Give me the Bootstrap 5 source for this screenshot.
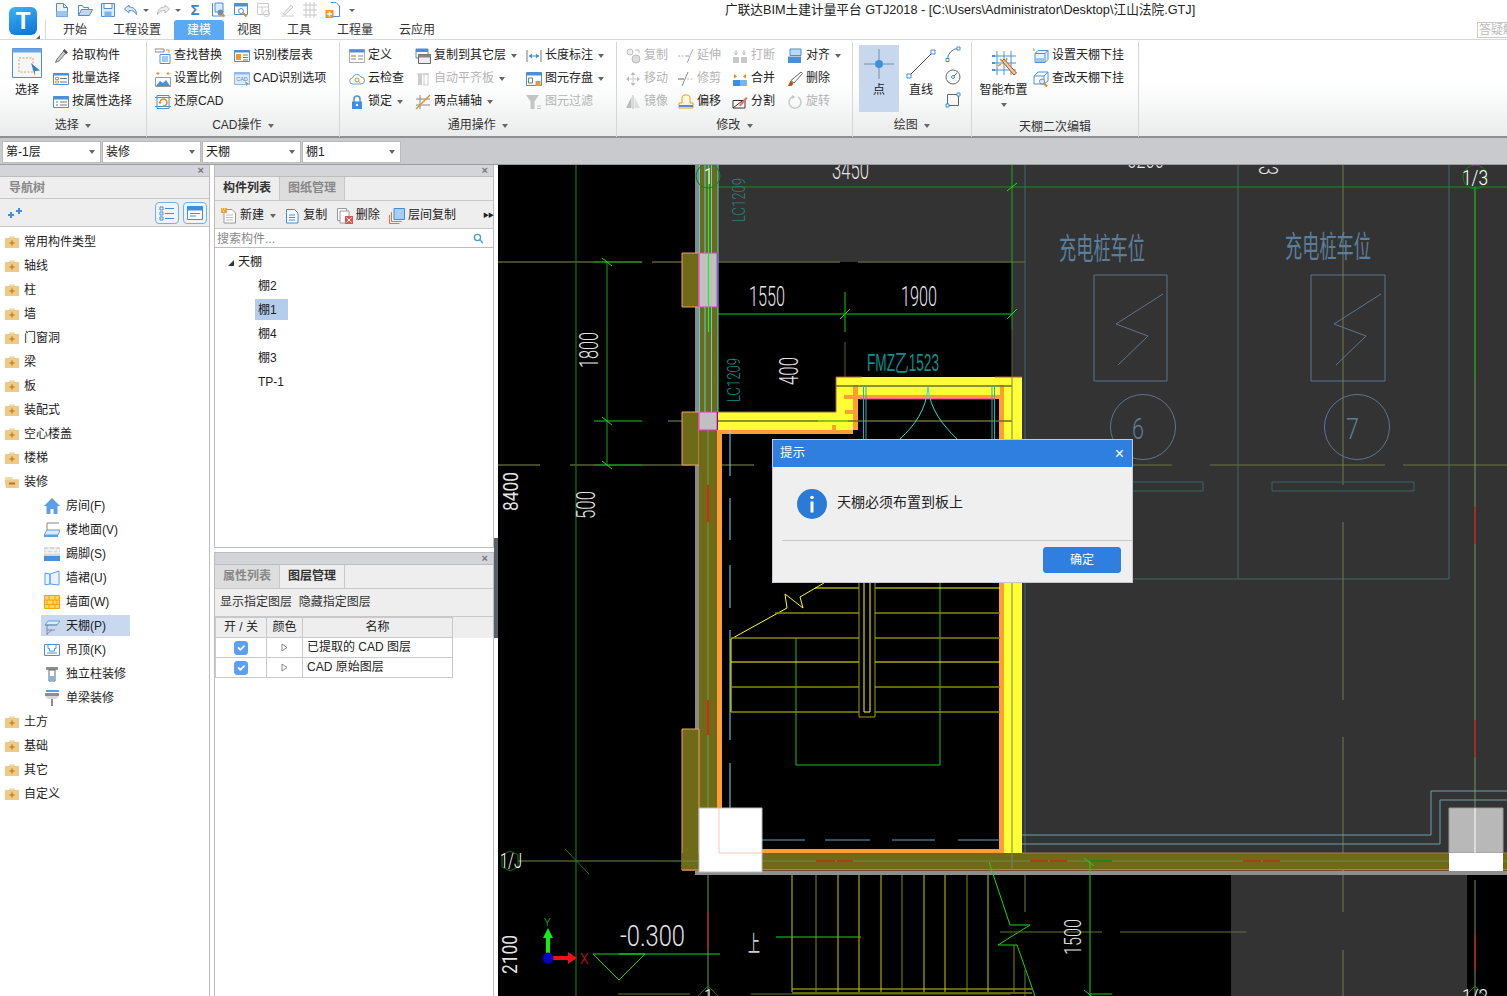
<!DOCTYPE html>
<html lang="zh-CN">
<head>
<meta charset="UTF-8">
<title>广联达BIM土建计量平台 GTJ2018</title>
<link href="https://cdn.jsdelivr.net/npm/bootstrap@5.3.0/dist/css/bootstrap.min.css" rel="stylesheet">
<style>
    html, body { width: 1507px; height: 996px; overflow: hidden; }
    body { font: 12px/1.2 "Liberation Sans", "Noto Sans CJK SC", sans-serif; color: #222; background: #fff; }
    .ic { width: 16px; height: 16px; flex: none; color: #4a90d9; }
    .ic-off { color: #bdbdbd; }

    /* title + tabs */
    .app-top { height: 40px; border-bottom: 1px solid #d9d9d9; }
    .app-logo { width: 46px; height: 40px; padding: 7px 0 0 9px; position: relative; }
    .app-logo-tile { width: 28px; height: 28px; border-radius: 6px; background: linear-gradient(160deg, #3bb3f2, #0d72d8); color: #fff; font: bold 24px/28px "Liberation Sans", sans-serif; text-align: center; }
    .app-logo-mark { position: absolute; right: 6px; bottom: 1px; border-left: 4px solid transparent; border-bottom: 4px solid #666; }
    .qa-row { height: 20px; }
    .qa-icons { width: 679px; padding-left: 8px; gap: 7px; }
    .qa-caret { width: 6px; margin: 0 -1px 0 -3px; border-top: 3px solid #666; border-left: 3px solid transparent; border-right: 3px solid transparent; height: 0; flex: none; }
    .qa-caret-end { margin-left: 1px; }
    .qa-sigma { color: #3f7fc4; font-size: 15px; width: 16px; text-align: center; font-weight: bold; }
    .qa-title { white-space: nowrap; font-size: 12.7px; padding-top: 1px; }
    .tab-row { height: 20px; border-left: 1px solid #d9d9d9; margin-left: -1px; padding-left: 4px; }
    .tab-item { padding: 0 13px; line-height: 21px; color: #333; white-space: nowrap; }
    .tab-on { background: #5aa9f5; color: #fff; border-radius: 3px 3px 0 0; }
    .help-box { width: 60px; height: 16px; margin: 2px -30px 0 auto; border: 1px solid #ccc; color: #bbb; padding-left: 1px; line-height: 14px; white-space: nowrap; overflow: hidden; }

    /* ribbon */
    .ribbon { height: 98px; background: linear-gradient(#fff 45%, #eaecec); border-bottom: 2px solid #8e9093; }
    .rb-group { height: 95px; border-right: 1px solid #d5d7d7; flex-direction: column; display: flex; margin-top: 2px; }
    .rb-body { height: 73px; padding-top: 2px; }
    .rb-foot { text-align: center; color: #333; height: 20px; line-height: 20px; }
    .rb-foot-low { line-height: 24px; }
    .rb-col { flex: none; }
    .rb-item { height: 23px; display: flex; align-items: center; gap: 3px; white-space: nowrap; }
    .rb-off { color: #b4b4b4; }
    .rb-big { text-align: center; flex: none; }
    .rb-big-on { background: #c7d7ee; height: 67px; }
    .rb-label { margin-top: 4px; }
    .rb-label-low { margin-top: 5px; }
    .caret-dn { display: inline-block; border-top: 4px solid #666; border-left: 3px solid transparent; border-right: 3px solid transparent; margin-left: 3px; vertical-align: 1px; }
    .rb-item .caret-dn { margin-left: 2px; }

    /* selector bar */
    .pick-bar { height: 27px; background: #c8cacd; border-bottom: 1px solid #9a9c9f; padding: 3px 0 0 2px; gap: 1px; }
    .pick-bar .form-select { width: 99px; height: 22px; min-height: 0; padding: 0 0 0 3px; font-size: 12px; line-height: 20px; border-radius: 0; border: 1px solid #bbb; color: #222; background-position: right 4px center; background-size: 8px 6px;
        background-image: url("data:image/svg+xml,%3csvg xmlns='http://www.w3.org/2000/svg' viewBox='0 0 8 6'%3e%3cpath fill='%23666' d='M1 1h6L4 5z'/%3e%3c/svg%3e"); }

    /* side panels */
    .main-area { height: 831px; }
    .side-box { border-left: 1px solid #bdbdbd; border-right: 1px solid #bdbdbd; background: #fff; }
    .side-nav { width: 210px; border-left-width: 0; }
    .side-mid { width: 280px; margin-left: 4px; }
    .pane-grip { height: 12px; background: #d4d5da; color: #777; font-size: 11px; line-height: 11px; text-align: right; padding-right: 5px; border-bottom: 1px solid #bdbdbd; font-weight: bold; }
    .pane-title { height: 22px; background: #eee; color: #888; font-weight: bold; line-height: 23px; padding-left: 9px; border-bottom: 1px solid #c8c8c8; }
    .pane-tools { height: 28px; background: #eee; border-bottom: 1px solid #c8c8c8; }
    .view-btn { width: 24px; height: 22px; padding: 0; border: 1px solid #6db3f2; border-radius: 4px; background: #eef5fc; display: flex; align-items: center; justify-content: center; }
    .tree-item { border: 0; padding: 0 0 0 4px; height: 24px; display: flex; align-items: center; gap: 6px; background: transparent; color: #222; }
    .tree-top { gap: 4px; }
    .tree-kid { padding-left: 44px; }
    .tree-sel { background: #c7d8ef; margin-left: 41px; padding: 2px 0 0 3px; width: 89px; height: 21px; margin-top: 1px; margin-bottom: 2px; }
    .tree-list { padding-top: 3px; }

    .pane-tabs { height: 24px; background: #eee; border-bottom: 1px solid #c8c8c8; flex-wrap: nowrap; }
    .pane-tab { width: 65px; text-align: center; line-height: 23px; font-weight: bold; color: #333; border-right: 1px solid #c8c8c8; }
    .pane-tab-off { background: #ddd; color: #888; }
    .mid-tool { gap: 3px; white-space: nowrap; }
    .mid-tools { padding: 2px 0 0 6px; }
    .mid-more { font-size: 6px; letter-spacing: -1px; font-weight: bold; }
    .search-row { height: 19px; border-bottom: 1px solid #bdbdbd; padding: 1px 9px 0 2px; color: #888; line-height: 18px; }
    .search-ic { width: 11px; height: 11px; }
    .comp-row { height: 24px; line-height: 24px; padding-left: 43px; }
    .comp-root { padding-left: 13px; }
    .comp-sel { background: #b3cdea; width: 33px; margin-left: 40px; padding-left: 3px; height: 21px; line-height: 22px; margin-top: 1px; margin-bottom: 2px; }
    .comp-tri { display: inline-block; border-bottom: 6px solid #333; border-left: 6px solid transparent; margin-right: 4px; }
    .comp-list { padding-top: 2px; height: 299px; }
    .pane-gap { height: 4px; background: #fff; border-top: 1px solid #bdbdbd; border-bottom: 1px solid #bdbdbd; margin: 0 -1px; box-sizing: content-box; }
    .layer-links { height: 28px; background: #eee; line-height: 27px; padding-left: 5px; border-bottom: 1px solid #c8c8c8; color: #333; }
    .layer-wrap { background: linear-gradient(#eee 21px, #fff 21px); }
    .layer-table { width: 238px; margin: 0; font-size: 12px; color: #222; --bs-table-bg: transparent; border-color: #c8c8c8; table-layout: fixed; }
    .layer-table th, .layer-table td { padding: 0; height: 20px; line-height: 19px; font-weight: normal; vertical-align: middle; }
    .layer-table .layer-name { padding-bottom: 2px; line-height: 16px; }
    .layer-check { width: 14px; height: 14px; margin: 3px 0 0 0; float: none; border-radius: 2px; background-color: #5aa1f5 !important; border-color: #5aa1f5 !important; }
    .layer-tri { display: inline-block; width: 7px; height: 9px; vertical-align: -1px; }

    .split-bar { width: 4px; background: #fff; position: relative; }
    .split-grip { position: absolute; left: 0; top: 373px; width: 4px; height: 100px; background: #5b5f66; }
    .cad-area { width: 1009px; position: relative; background: #000; overflow: hidden; }
    .cad-svg { display: block; }
    .cad-num { font-family: Roboto, "Liberation Sans", sans-serif; font-weight: 300; fill: #e4e4e4; }
    .cad-bold { font-weight: 400; }
    .cad-cn { font-family: "Noto Sans CJK SC", sans-serif; fill: #5b7e9b; }
    .cad-up { font-family: "Noto Sans CJK SC", sans-serif; fill: #cfcfcf; }
    .cad-slate { fill: #5b7e9b; }
    .cad-white { fill: #fff; }
    .cad-teal { fill: #0e8f8f; font-family: "Liberation Sans", "Noto Sans CJK SC", sans-serif; font-weight: 400; }
    .cad-teal-dim { fill: #2a7f7c; }
    .cad-teal-mid { fill: #0e8f8f; }
    .cad-axis-y { fill: #11cc11; }
    .cad-axis-x { fill: #e01111; }

    /* dialog over the drawing */
    .tip-box { position: absolute; left: 274px; top: 274px; width: 361px; height: 144px; border: 1px solid #c5c8ce; border-radius: 0; background: #efefef; }
    .tip-head { height: 27px; background: #2e7fe0; color: #fff; line-height: 27px; padding: 0 8px 0 7px; border: 0; border-radius: 0 !important; font-size: 12.5px; }
    .tip-x { font-size: 16px; font-weight: normal; }
    .tip-body { height: 74px; gap: 10px; font-size: 14px; border-bottom: 1px solid #c8c8c8; width: 350px; margin-left: 9px; margin-right: 0; padding-left: 15px; }
    .tip-msg { margin-bottom: 2px; }
    .tip-foot { padding: 6px 11px 0 0; }
    .tip-btn { width: 78px; height: 26px; padding: 0; font-size: 12px; background: #2e7fe0; border-color: #2e7fe0; border-radius: 3px; }
</style>
</head>
<body>

<!-- shared icon shapes -->
<svg width="0" height="0" class="position-absolute">
<defs>
    <symbol id="i-doc" viewBox="0 0 16 16"><path d="M2.500 1.500h7l4 4v9h-11z" fill="#eaf3fc" stroke="#4a90d9"/><path d="M2.500 9h11v5.500h-11z" fill="#9cc5ef"/><path d="M9.500 1.500v4h4" fill="none" stroke="#4a90d9"/></symbol>
    <symbol id="i-open" viewBox="0 0 16 16"><path d="M1.500 13.500v-10h4l1 2h5v2" fill="none" stroke="#4a90d9"/><path d="M1.500 13.500l3-6h11l-3 6z" fill="#bcd8f5" stroke="#4a90d9"/></symbol>
    <symbol id="i-save" viewBox="0 0 16 16"><path d="M1.500 1.500h13v13h-13z" fill="#dcebfa" stroke="#4a90d9"/><path d="M4 1.500h8v5h-8z" fill="#fff" stroke="#4a90d9"/><path d="M4.500 9.500h7v5h-7z" fill="#7fb4ea"/></symbol>
    <symbol id="i-undo" viewBox="0 0 16 16"><path d="M6 3L1.500 7 6 11V8.500c4 0 6 1 7.500 4 0-5-3-7.500-7.500-7.500z" fill="#dcebfa" stroke="currentColor"/></symbol>
    <symbol id="i-redo" viewBox="0 0 16 16"><path d="M10 3l4.500 4L10 11V8.500c-4 0-6 1-7.500 4 0-5 3-7.500 7.500-7.500z" fill="#eee" stroke="#bbb"/></symbol>
    <symbol id="i-sheet" viewBox="0 0 16 16"><path d="M2.500 1v13h11" fill="none" stroke="#4a90d9"/><path d="M5 1h8v9h-8z" fill="#dcebfa" stroke="#4a90d9"/><circle cx="10.500" cy="10.500" r="3" fill="#6d8fb5"/><path d="M12 12l2.500 2.500" stroke="#e88a1a" stroke-width="2"/></symbol>
    <symbol id="i-view" viewBox="0 0 16 16"><path d="M1.500 1.500h13v11h-13z" fill="#fff" stroke="#4a90d9"/><path d="M1.500 1.500h13v3h-13z" fill="#4a90d9"/><circle cx="8" cy="9" r="2.500" fill="none" stroke="#4a90d9"/><path d="M10 11l3.500 3.500" stroke="#e88a1a" stroke-width="2"/></symbol>
    <symbol id="i-grid" viewBox="0 0 16 16"><path d="M1.500 1.500h11v11h-11zM1.500 5h11M6 5v7.500" fill="none" stroke="#ccc"/><circle cx="10.500" cy="11.500" r="3" fill="none" stroke="#ccc"/></symbol>
    <symbol id="i-pen-off" viewBox="0 0 16 16"><path d="M2 14h13M4 12l8-9 2 2-8 8z" fill="#eee" stroke="#ccc"/></symbol>
    <symbol id="i-mesh" viewBox="0 0 16 16"><path d="M1 3h14M1 8h14M1 13h14M4 0v16M8 0v16M12 0v16" stroke="#c8c8c8"/></symbol>
    <symbol id="i-pagenew" viewBox="0 0 16 16"><path d="M6 .5h5l3.500 3.500v10.500h-8.500" fill="#fff" stroke="#4a90d9"/><path d="M.5 8h8v8h-8z" fill="#f0952a"/><path d="M4.500 9.500v5M2 12h5" stroke="#fff" stroke-width="1.500"/></symbol>
    <symbol id="i-dropper" viewBox="0 0 16 16"><path d="M11 2l3 3-2 1-6 7-3.500 1.500L4 11l6-7z" fill="#c9ced3" stroke="#777"/><path d="M11.500 1l3.500 3.500-2 1.500-3-3z" fill="#555"/></symbol>
    <symbol id="i-batch" viewBox="0 0 16 16"><path d="M.5 2.500h15v11H.500z" fill="#fff" stroke="#4a90d9"/><path d="M.5 2.500h15v2H.500z" fill="#4a90d9"/><path d="M2.500 6.500h3v2h-3zM2.500 10h3v2h-3z" fill="none" stroke="#f0952a"/><path d="M7 7.500h7M7 11h7" stroke="#777"/></symbol>
    <symbol id="i-prop" viewBox="0 0 16 16"><path d="M.5 2.500h15v11H.500z" fill="#fff" stroke="#4a90d9"/><path d="M.5 2.500h15v3H.500z" fill="#4a90d9"/><path d="M3 8h2M3 11h2M7 8h7M7 11h7" stroke="#777"/></symbol>
    <symbol id="i-replace" viewBox="0 0 16 16"><path d="M0 1h9v3H0z" fill="none" stroke="#888"/><path d="M11 2h3v3" fill="none" stroke="#e88a1a"/><path d="M5 6.500h10v9H5z" fill="#fff" stroke="#4a90d9"/><path d="M7 9h6M7 11h6M7 13h6" stroke="#4a90d9"/></symbol>
    <symbol id="i-scale" viewBox="0 0 16 16"><path d="M.5 6.500h15v9H.500z" fill="#fff" stroke="#9a9a9a"/><path d="M1 15l4-5 3 2 3-3 4 6z" fill="#4a90d9"/><path d="M3 1v3M1.500 2.500h3M13 1v3M11.500 2.500h3" stroke="#e88a1a"/></symbol>
    <symbol id="i-restore" viewBox="0 0 16 16"><path d="M2 1.500h12v13H2z" fill="#fff" stroke="#4a90d9"/><path d="M0 3.500h16M0 12.500h16" stroke="#4a90d9"/><path d="M5 9a3.500 3.500 0 1 1 3 3" fill="none" stroke="#e88a1a" stroke-width="1.500"/><path d="M3.500 8h3L5 10.500z" fill="#e88a1a"/></symbol>
    <symbol id="i-floortable" viewBox="0 0 16 16"><path d="M.5 2.500h15v11H.500z" fill="#fff" stroke="#4a90d9"/><path d="M.5 2.500h15v2H.500z" fill="#4a90d9"/><path d="M2 6h5v6H2z" fill="#f0952a"/><path d="M9 7h5M9 9.500h5M9 12h5" stroke="#777"/></symbol>
    <symbol id="i-cadopt" viewBox="0 0 16 16"><path d="M.5 1.500h15v12H.500z" fill="#dcebfa" stroke="#8fb9e6"/><path d="M.5 1.500h15v2H.500z" fill="#8fb9e6"/><text x="8" y="10" font-size="5.500" text-anchor="middle" fill="#5a86b5" font-family="Liberation Sans">CAD</text><path d="M11 10l4 3-2 .5-.5 2z" fill="#e88a1a"/></symbol>
    <symbol id="i-define" viewBox="0 0 16 16"><path d="M.5 1.500h15v13H.500z" fill="#fff" stroke="#a9a9a9"/><path d="M.5 1.500h15v3H.500z" fill="#4a90d9"/><path d="M2 7h5v2H2z" fill="#f0b45a"/><path d="M2 11h5M9 8h5M9 11h5" stroke="#888"/></symbol>
    <symbol id="i-cloud" viewBox="0 0 16 16"><path d="M4 13a3 3 0 0 1-.5-6A4.500 4.500 0 0 1 12 6a3.500 3.500 0 0 1 0 7z" fill="#fff" stroke="#5aa1e6"/><circle cx="8" cy="9" r="2" fill="none" stroke="#e88a1a"/><path d="M9.500 10.500l2 1.500" stroke="#e88a1a"/></symbol>
    <symbol id="i-lock" viewBox="0 0 16 16"><path d="M5 8V5a3 3 0 0 1 6 0v3" fill="none" stroke="#4a90d9" stroke-width="1.500"/><path d="M3 7.500h10V15H3z" fill="#3f8fe0"/><circle cx="8" cy="11" r="1.200" fill="#fff"/></symbol>
    <symbol id="i-copyfloor" viewBox="0 0 16 16"><path d="M1 1h12v9H1z" fill="#fff" stroke="#4a90d9"/><path d="M1 1h12v3H1z" fill="#4a90d9"/><path d="M3.500 6.500h12v9h-12z" fill="#eee" stroke="#666"/><path d="M3.500 6.500h12v3h-12z" fill="#888"/></symbol>
    <symbol id="i-flush" viewBox="0 0 16 16"><path d="M2 3h12" stroke="#bbb"/><path d="M3 3h4v11H3z" fill="#ccc"/><path d="M9 3h4v11H9z" fill="none" stroke="#ccc"/></symbol>
    <symbol id="i-axis" viewBox="0 0 16 16"><path d="M1 5h14M1 11h14" stroke="#888"/><path d="M5 1v14" stroke="#888"/><path d="M1 15L15 1" stroke="#e88a1a" stroke-width="1.300"/></symbol>
    <symbol id="i-dim" viewBox="0 0 16 16"><path d="M1 2v12M15 2v12" stroke="#777"/><path d="M3 8h10" stroke="#3f8fe0"/><path d="M3 8l3-2.500v5zM13 8l-3-2.500v5z" fill="#3f8fe0"/></symbol>
    <symbol id="i-keep" viewBox="0 0 16 16"><path d="M.5 1.500h15v13H.500z" fill="#fff" stroke="#4a90d9"/><path d="M.5 1.500h15v3H.500z" fill="#4a90d9"/><path d="M2.500 7h4v5h-4z" fill="none" stroke="#777"/><path d="M9.500 10h5v5h-5z" fill="#f0952a"/></symbol>
    <symbol id="i-filter" viewBox="0 0 16 16"><path d="M0 1h13L8.500 7.500V15h-4V7.500z" fill="#c4c4c4"/><path d="M11 12h4M11 14.500h4" stroke="#c4c4c4"/></symbol>
    <symbol id="i-dup" viewBox="0 0 16 16"><circle cx="5" cy="4" r="3" fill="#eee" stroke="#bbb"/><circle cx="11" cy="11" r="4" fill="#ddd" stroke="#bbb"/><path d="M10 2h4v3" fill="none" stroke="#bbb"/></symbol>
    <symbol id="i-move" viewBox="0 0 16 16"><path d="M8 1l2.500 3h-5zM8 15l-2.500-3h5zM1 8l3-2.500v5zM15 8l-3 2.500v-5z" fill="#bbb"/><path d="M8 4v8M4 8h8" stroke="#ccc"/></symbol>
    <symbol id="i-mirror" viewBox="0 0 16 16"><path d="M8 1v14" stroke="#bbb"/><path d="M6.500 3v11H1z" fill="#bbb"/><path d="M9.500 3v11H15z" fill="#ddd"/></symbol>
    <symbol id="i-extend" viewBox="0 0 16 16"><path d="M0 8h8" stroke="#bbb" stroke-dasharray="2 1.500"/><path d="M9 15L15 1" stroke="#aaa"/><path d="M8 8h3" stroke="#999"/></symbol>
    <symbol id="i-trim" viewBox="0 0 16 16"><path d="M0 8h6" stroke="#666"/><path d="M9 8h7" stroke="#bbb" stroke-dasharray="2 1.500"/><path d="M4 15L10 1" stroke="#888"/></symbol>
    <symbol id="i-offset" viewBox="0 0 16 16"><path d="M1 14v-5h3V3a3 3 0 0 1 3-2h2a3 3 0 0 1 3 2v6h3v5z" fill="#fff6dc" stroke="#e8a21a"/><path d="M1 12h14" stroke="#4a90d9" stroke-width="2"/></symbol>
    <symbol id="i-break" viewBox="0 0 16 16"><path d="M1 9h6v6H1zM9 9h6v6H9z" fill="#c8c8c8"/><path d="M4 2v4M2.500 4.500L4 7l1.500-2.500M12 2v4M10.500 4.500L12 7l1.500-2.500" fill="none" stroke="#bbb"/></symbol>
    <symbol id="i-merge" viewBox="0 0 16 16"><path d="M1 9h7v6H1z" fill="#3f8fe0"/><path d="M8 9h7v6H8z" fill="#7fb4ea"/><path d="M2 3l3 2.500-3 2zM14 3l-3 2.500 3 2z" fill="#e88a1a"/></symbol>
    <symbol id="i-split" viewBox="0 0 16 16"><path d="M1 6.500h12V14H1z" fill="#fff" stroke="#333"/><path d="M1 14l9-7" stroke="#333"/><path d="M7 11l7-8 1.500 1.500-7 8z" fill="#e8705a"/></symbol>
    <symbol id="i-alignrect" viewBox="0 0 16 16"><path d="M3 1h11v6.500H3z" fill="#bcd8f5" stroke="#4a90d9"/><path d="M1 8.500h13V15H1z" fill="#4a90d9"/></symbol>
    <symbol id="i-erase" viewBox="0 0 16 16"><path d="M14 1l1.500 1.500L7 12l-3-2.500z" fill="#fff" stroke="#666"/><path d="M3.500 9.500l3 3-2 2.500H1z" fill="#b5541f"/></symbol>
    <symbol id="i-spin" viewBox="0 0 16 16"><path d="M11 3a6 6 0 1 1-6 0" fill="none" stroke="#c8c8c8" stroke-width="1.500"/><path d="M5 1l3.500 2L5 5z" fill="#c8c8c8"/></symbol>
    <symbol id="i-select" viewBox="0 0 30 30"><path d="M.5.5h29v29H.500z" fill="#f4f8fd" stroke="#4a90d9"/><path d="M.5.5h29v4H.500z" fill="#6aa5e2"/><path d="M7 10h14v14H7z" fill="none" stroke="#f0a030" stroke-dasharray="2 1.500"/><path d="M20 15l9 7.500-5 .5v5z" fill="#3f7fc4" transform="translate(-1 0)"/></symbol>
    <symbol id="i-point" viewBox="0 0 30 30"><path d="M15 0v30M0 15h30" stroke="#7d8ca0"/><circle cx="15" cy="15" r="4" fill="#3f8fe0"/></symbol>
    <symbol id="i-line" viewBox="0 0 30 30"><path d="M2.500 27.500L27.500 2.500" stroke="#444"/><path d="M1 25h4v4H1zM25 1h4v4h-4z" fill="#fff" stroke="#3f8fe0"/></symbol>
    <symbol id="i-arc" viewBox="0 0 16 16"><path d="M2.500 13.500A11 11 0 0 1 13.500 2.500" fill="none" stroke="#666"/><path d="M1 12.500h3v3H1zM12 1h3v3h-3z" fill="#fff" stroke="#3f8fe0"/></symbol>
    <symbol id="i-circle" viewBox="0 0 16 16"><circle cx="8" cy="8" r="7" fill="none" stroke="#666"/><path d="M8 8l4-4" stroke="#666"/><circle cx="8" cy="8" r="1.500" fill="#fff" stroke="#3f8fe0"/></symbol>
    <symbol id="i-rect" viewBox="0 0 16 16"><path d="M2.500 2.500h11v11h-11z" fill="none" stroke="#666"/><path d="M12 1h3v3h-3zM1 12h3v3H1z" fill="#fff" stroke="#3f8fe0"/></symbol>
    <symbol id="i-smart" viewBox="0 0 30 30"><path d="M8 3v24M15 3v24M22 3v24M3 8h24M3 15h24M3 22h24" stroke="#4a90d9"/><path d="M3 8h3M3 15h3M3 22h3" stroke="#4a90d9" stroke-width="2"/><path d="M13 13l12 14 2.500-2L15 11z" fill="#f3c8a0" stroke="#b5541f"/><path d="M11 11l3 3M9 18l3-2M18 10l-1 3" stroke="#e88a1a" stroke-width="1.500"/></symbol>
    <symbol id="i-ceilset" viewBox="0 0 16 16"><path d="M2 5.500l3-3h10v9l-3 3H2z" fill="#eaf3fc" stroke="#4a90d9"/><path d="M2 5.500h10v9M12 5.500l3-3" fill="none" stroke="#4a90d9"/><path d="M2.500 10h9v4h-9z" fill="#9cc5ef"/><path d="M0 0v2h2" fill="none" stroke="#e88a1a"/></symbol>
    <symbol id="i-ceilfind" viewBox="0 0 16 16"><path d="M1 5l4-4h10v9l-4 3H1z" fill="#fff" stroke="#4a90d9"/><path d="M1 5h10v8M11 5l4-4" fill="none" stroke="#4a90d9"/><circle cx="9" cy="10.500" r="2.500" fill="#dcebfa" stroke="#6d8fb5"/><path d="M11 12.500l3 3" stroke="#e88a1a" stroke-width="2"/></symbol>

    <symbol id="i-folder" viewBox="0 0 16 16"><path d="M5 2.500h6v2H5z" fill="#f5d8a0"/><path d="M1 4h14v10H1z" fill="#efc987"/><path d="M8 6.500v5M5.500 9h5" stroke="#c08a2a" stroke-width="1.500"/></symbol>
    <symbol id="i-folderopen" viewBox="0 0 16 16"><path d="M1 3h7l1 2h6v9H2z" fill="#f5d8a0"/><path d="M.5 6h14l-1 8H2z" fill="#efc987"/><path d="M5 9.500h6" stroke="#a87a22" stroke-width="2"/></symbol>
    <symbol id="i-room" viewBox="0 0 16 16"><path d="M8 0L0 8h2.500v8h4v-5h3v5h4V8H16z" fill="#5d9fe6"/></symbol>
    <symbol id="i-ground" viewBox="0 0 16 16"><path d="M3 1h12M3 1v7" fill="none" stroke="#888"/><path d="M0 13l3-5h13l-2 5z" fill="#dcebfa" stroke="#5d9fe6"/><path d="M0 13h14v2H0z" fill="#5d9fe6"/></symbol>
    <symbol id="i-skirt" viewBox="0 0 16 16"><path d="M0 1h16v9H0z" fill="#d8d8d8"/><path d="M0 4h16M0 7h16M5 1v3M11 1v3M3 4v3M9 4v3M14 4v3" stroke="#fff"/><path d="M0 10h16v5H0z" fill="#4a90d9"/></symbol>
    <symbol id="i-dado" viewBox="0 0 16 16"><path d="M1 3l5 1v10l-5 1zM6 4l9-3v14l-9-1z" fill="#eaf3fc" stroke="#5d9fe6"/></symbol>
    <symbol id="i-face" viewBox="0 0 16 16"><path d="M.5 1.500h15v13H.500z" fill="#ffd36b" stroke="#f0a500"/><path d="M.5 6h15M.5 10.500h15M5 1.500V6M11 1.500V6M3 6v4.500M9 6v4.500M13 6v4.500M5 10.500v4M11 10.500v4" stroke="#f0a500"/></symbol>
    <symbol id="i-ceil" viewBox="0 0 16 16"><path d="M1 6l3-4h12l-3 4z" fill="#dcebfa" stroke="#5d9fe6"/><path d="M1 6h12M3 6v10M3 11h8M3 15l5-4" fill="none" stroke="#7d8ca0"/></symbol>
    <symbol id="i-hang" viewBox="0 0 16 16"><path d="M.5 2.500h15v11H.500z" fill="#fff" stroke="#4a90d9"/><path d="M4 2.500v4h1.500V9h5V6.500H12v-4" fill="none" stroke="#4a90d9"/><path d="M3 11h10" stroke="#4a90d9"/></symbol>
    <symbol id="i-colwrap" viewBox="0 0 16 16"><path d="M2 1h12v3H2z" fill="#8a8f96"/><path d="M5 4h6v11H5z" fill="#fff" stroke="#666"/><path d="M5.500 10h5v4.500h-5z" fill="#7fb4ea"/></symbol>
    <symbol id="i-beamwrap" viewBox="0 0 16 16"><path d="M1 3h14v3H1z" fill="#8a8f96"/><path d="M1 6h14l-3 3H4z" fill="#d8d8d8"/><path d="M2 1h13" stroke="#5d9fe6" stroke-width="2"/><path d="M7 9h2v7H7z" fill="#8a8f96"/></symbol>

    <symbol id="i-plus" viewBox="0 0 16 16"><path d="M1 10h6M4 7v6M9 6h6M12 3v6" stroke="#3f8fe0" stroke-width="2"/></symbol>
    <symbol id="i-listview" viewBox="0 0 16 16"><path d="M1 2h3v3H1zM1 7h3v3H1zM1 12h3v3H1z" fill="none" stroke="#3f8fe0"/><path d="M6 3.500h9M6 8.500h9M6 13.500h9" stroke="#3f8fe0"/></symbol>
    <symbol id="i-cardview" viewBox="0 0 16 16"><path d="M.5 1.500h15v13H.500z" fill="#fff" stroke="#3f8fe0"/><path d="M.5 1.500h15v4H.500z" fill="#3f8fe0"/><path d="M3 8.500h10M3 11h6" stroke="#3f8fe0"/></symbol>
    <symbol id="i-newdoc" viewBox="0 0 16 16"><path d="M3 1.500h8l3.500 3.500v10H3z" fill="#fff" stroke="#999"/><path d="M5 7h7M5 9.500h7M5 12h7" stroke="#bbb"/><path d="M0 0h6v5H0z" fill="#f0a030"/><path d="M1 1h1M3 1h1M2 3h1" stroke="#fff"/></symbol>
    <symbol id="i-copydoc" viewBox="0 0 16 16"><path d="M2.500 1.500h8l3.500 3.500v10H2.500z" fill="#fff" stroke="#3f8fe0"/><path d="M5 7h6M5 9.500h6M5 12h6" stroke="#3f8fe0"/></symbol>
    <symbol id="i-deldoc" viewBox="0 0 16 16"><path d="M.5.5h9v12h-9z" fill="#fff" stroke="#999"/><path d="M3 3h9v12H3z" fill="#fff" stroke="#999"/><path d="M8 8h8v8H8z" fill="#d9534f"/><path d="M9.500 9.500l5 5M14.500 9.500l-5 5" stroke="#fff"/></symbol>
    <symbol id="i-floorcopy" viewBox="0 0 16 16"><path d="M5 .5h10.500v11H5z" fill="#a9cdf3" stroke="#3f8fe0"/><path d="M2.500 4v9.500h10M.5 7v8.500h10" fill="none" stroke="#e8772a"/></symbol>
    <symbol id="i-search" viewBox="0 0 16 16"><circle cx="6.500" cy="6.500" r="4.500" fill="none" stroke="#3f9fd8" stroke-width="2"/><path d="M10 10l4.500 4.500" stroke="#3f9fd8" stroke-width="2"/></symbol>
</defs>
</svg>

<!-- title + tabs -->
<div class="app-top d-flex">
    <div class="app-logo">
        <div class="app-logo-tile">T</div>
        <span class="app-logo-mark"></span>
    </div>
    <div class="flex-grow-1">
        <div class="qa-row d-flex align-items-center">
            <div class="qa-icons d-flex align-items-center">
                <svg class="ic"><use href="#i-doc"/></svg>
                <svg class="ic"><use href="#i-open"/></svg>
                <svg class="ic"><use href="#i-save"/></svg>
                <svg class="ic"><use href="#i-undo"/></svg><span class="qa-caret"></span>
                <svg class="ic"><use href="#i-redo"/></svg><span class="qa-caret"></span>
                <span class="qa-sigma">Σ</span>
                <svg class="ic"><use href="#i-sheet"/></svg>
                <svg class="ic"><use href="#i-view"/></svg>
                <svg class="ic"><use href="#i-grid"/></svg>
                <svg class="ic"><use href="#i-pen-off"/></svg>
                <svg class="ic"><use href="#i-mesh"/></svg>
                <svg class="ic"><use href="#i-pagenew"/></svg>
                <span class="qa-caret qa-caret-end"></span>
            </div>
            <div class="qa-title">广联达BIM土建计量平台 GTJ2018 - [C:\Users\Administrator\Desktop\江山法院.GTJ]</div>
        </div>
        <div class="tab-row d-flex">
            <span class="tab-item">开始</span>
            <span class="tab-item">工程设置</span>
            <span class="tab-item tab-on">建模</span>
            <span class="tab-item">视图</span>
            <span class="tab-item">工具</span>
            <span class="tab-item">工程量</span>
            <span class="tab-item">云应用</span>
            <span class="help-box">答疑解惑</span>
        </div>
    </div>
</div>

<!-- ribbon -->
<div class="ribbon d-flex">
    <div class="rb-group" style="width:147px">
        <div class="rb-body d-flex ps-2">
            <div class="rb-big" style="width:38px;margin-right:7px">
                <svg width="30" height="30" class="mt-1"><use href="#i-select"/></svg>
                <div class="rb-label-low">选择</div>
            </div>
            <div class="rb-col">
                <div class="rb-item"><svg class="ic"><use href="#i-dropper"/></svg>拾取构件</div>
                <div class="rb-item"><svg class="ic"><use href="#i-batch"/></svg>批量选择</div>
                <div class="rb-item"><svg class="ic"><use href="#i-prop"/></svg>按属性选择</div>
            </div>
        </div>
        <div class="rb-foot">选择 <span class="caret-dn"></span></div>
    </div>
    <div class="rb-group" style="width:193px">
        <div class="rb-body d-flex ps-2">
            <div class="rb-col" style="width:79px">
                <div class="rb-item"><svg class="ic"><use href="#i-replace"/></svg>查找替换</div>
                <div class="rb-item"><svg class="ic"><use href="#i-scale"/></svg>设置比例</div>
                <div class="rb-item"><svg class="ic"><use href="#i-restore"/></svg>还原CAD</div>
            </div>
            <div class="rb-col">
                <div class="rb-item"><svg class="ic"><use href="#i-floortable"/></svg>识别楼层表</div>
                <div class="rb-item"><svg class="ic"><use href="#i-cadopt"/></svg>CAD识别选项</div>
            </div>
        </div>
        <div class="rb-foot">CAD操作 <span class="caret-dn"></span></div>
    </div>
    <div class="rb-group" style="width:277px">
        <div class="rb-body d-flex" style="padding-left:9px">
            <div class="rb-col" style="width:66px">
                <div class="rb-item"><svg class="ic"><use href="#i-define"/></svg>定义</div>
                <div class="rb-item"><svg class="ic"><use href="#i-cloud"/></svg>云检查</div>
                <div class="rb-item"><svg class="ic"><use href="#i-lock"/></svg>锁定<span class="caret-dn"></span></div>
            </div>
            <div class="rb-col" style="width:111px">
                <div class="rb-item"><svg class="ic"><use href="#i-copyfloor"/></svg>复制到其它层<span class="caret-dn"></span></div>
                <div class="rb-item rb-off"><svg class="ic"><use href="#i-flush"/></svg>自动平齐板<span class="caret-dn"></span></div>
                <div class="rb-item"><svg class="ic"><use href="#i-axis"/></svg>两点辅轴<span class="caret-dn"></span></div>
            </div>
            <div class="rb-col">
                <div class="rb-item"><svg class="ic"><use href="#i-dim"/></svg>长度标注<span class="caret-dn"></span></div>
                <div class="rb-item"><svg class="ic"><use href="#i-keep"/></svg>图元存盘<span class="caret-dn"></span></div>
                <div class="rb-item rb-off"><svg class="ic"><use href="#i-filter"/></svg>图元过滤</div>
            </div>
        </div>
        <div class="rb-foot">通用操作 <span class="caret-dn"></span></div>
    </div>
    <div class="rb-group" style="width:236px">
        <div class="rb-body d-flex ps-2">
            <div class="rb-col rb-off" style="width:53px">
                <div class="rb-item"><svg class="ic"><use href="#i-dup"/></svg>复制</div>
                <div class="rb-item"><svg class="ic"><use href="#i-move"/></svg>移动</div>
                <div class="rb-item"><svg class="ic"><use href="#i-mirror"/></svg>镜像</div>
            </div>
            <div class="rb-col" style="width:54px">
                <div class="rb-item rb-off"><svg class="ic"><use href="#i-extend"/></svg>延伸</div>
                <div class="rb-item rb-off"><svg class="ic"><use href="#i-trim"/></svg>修剪</div>
                <div class="rb-item"><svg class="ic"><use href="#i-offset"/></svg>偏移</div>
            </div>
            <div class="rb-col" style="width:55px">
                <div class="rb-item rb-off"><svg class="ic"><use href="#i-break"/></svg>打断</div>
                <div class="rb-item"><svg class="ic"><use href="#i-merge"/></svg>合并</div>
                <div class="rb-item"><svg class="ic"><use href="#i-split"/></svg>分割</div>
            </div>
            <div class="rb-col">
                <div class="rb-item"><svg class="ic"><use href="#i-alignrect"/></svg>对齐<span class="caret-dn"></span></div>
                <div class="rb-item"><svg class="ic"><use href="#i-erase"/></svg>删除</div>
                <div class="rb-item rb-off"><svg class="ic"><use href="#i-spin"/></svg>旋转</div>
            </div>
        </div>
        <div class="rb-foot">修改 <span class="caret-dn"></span></div>
    </div>
    <div class="rb-group" style="width:119px">
        <div class="rb-body d-flex" style="padding:3px 0 0 6px">
            <div class="rb-big rb-big-on" style="width:40px">
                <svg width="30" height="30" class="mt-1"><use href="#i-point"/></svg>
                <div class="rb-label">点</div>
            </div>
            <div class="rb-big" style="width:32px;margin:0 8px 0 6px">
                <svg width="30" height="30" class="mt-1"><use href="#i-line"/></svg>
                <div class="rb-label">直线</div>
            </div>
            <div class="rb-col d-flex flex-column" style="gap:7px;padding-top:1px">
                <svg class="ic"><use href="#i-arc"/></svg>
                <svg class="ic"><use href="#i-circle"/></svg>
                <svg class="ic"><use href="#i-rect"/></svg>
            </div>
        </div>
        <div class="rb-foot">绘图 <span class="caret-dn"></span></div>
    </div>
    <div class="rb-group" style="width:167px">
        <div class="rb-body d-flex" style="padding-left:7px">
            <div class="rb-big" style="width:49px;margin-right:5px">
                <svg width="30" height="30" class="mt-1"><use href="#i-smart"/></svg>
                <div class="rb-label-low">智能布置</div>
                <span class="caret-dn m-0"></span>
            </div>
            <div class="rb-col">
                <div class="rb-item"><svg class="ic"><use href="#i-ceilset"/></svg>设置天棚下挂</div>
                <div class="rb-item"><svg class="ic"><use href="#i-ceilfind"/></svg>查改天棚下挂</div>
            </div>
        </div>
        <div class="rb-foot rb-foot-low">天棚二次编辑</div>
    </div>
</div>

<!-- floor / type selectors -->
<div class="pick-bar d-flex">
    <select class="form-select"><option>第-1层</option></select>
    <select class="form-select"><option>装修</option></select>
    <select class="form-select"><option>天棚</option></select>
    <select class="form-select"><option>棚1</option></select>
</div>

<div class="main-area d-flex">
    <!-- navigation tree -->
    <div class="side-box side-nav">
        <div class="pane-grip">×</div>
        <div class="pane-title">导航树</div>
        <div class="pane-tools d-flex align-items-center justify-content-between" style="padding:0 2px 0 7px">
            <svg class="ic"><use href="#i-plus"/></svg>
            <div class="d-flex gap-1">
                <button class="view-btn"><svg class="ic"><use href="#i-listview"/></svg></button>
                <button class="view-btn"><svg class="ic"><use href="#i-cardview"/></svg></button>
            </div>
        </div>
        <div class="list-group list-group-flush tree-list">
            <div class="list-group-item tree-item tree-top"><svg class="ic"><use href="#i-folder"/></svg>常用构件类型</div>
            <div class="list-group-item tree-item tree-top"><svg class="ic"><use href="#i-folder"/></svg>轴线</div>
            <div class="list-group-item tree-item tree-top"><svg class="ic"><use href="#i-folder"/></svg>柱</div>
            <div class="list-group-item tree-item tree-top"><svg class="ic"><use href="#i-folder"/></svg>墙</div>
            <div class="list-group-item tree-item tree-top"><svg class="ic"><use href="#i-folder"/></svg>门窗洞</div>
            <div class="list-group-item tree-item tree-top"><svg class="ic"><use href="#i-folder"/></svg>梁</div>
            <div class="list-group-item tree-item tree-top"><svg class="ic"><use href="#i-folder"/></svg>板</div>
            <div class="list-group-item tree-item tree-top"><svg class="ic"><use href="#i-folder"/></svg>装配式</div>
            <div class="list-group-item tree-item tree-top"><svg class="ic"><use href="#i-folder"/></svg>空心楼盖</div>
            <div class="list-group-item tree-item tree-top"><svg class="ic"><use href="#i-folder"/></svg>楼梯</div>
            <div class="list-group-item tree-item tree-top"><svg class="ic"><use href="#i-folderopen"/></svg>装修</div>
            <div class="list-group-item tree-item tree-kid"><svg class="ic"><use href="#i-room"/></svg>房间(F)</div>
            <div class="list-group-item tree-item tree-kid"><svg class="ic"><use href="#i-ground"/></svg>楼地面(V)</div>
            <div class="list-group-item tree-item tree-kid"><svg class="ic"><use href="#i-skirt"/></svg>踢脚(S)</div>
            <div class="list-group-item tree-item tree-kid"><svg class="ic"><use href="#i-dado"/></svg>墙裙(U)</div>
            <div class="list-group-item tree-item tree-kid"><svg class="ic"><use href="#i-face"/></svg>墙面(W)</div>
            <div class="list-group-item tree-item tree-sel"><svg class="ic"><use href="#i-ceil"/></svg>天棚(P)</div>
            <div class="list-group-item tree-item tree-kid"><svg class="ic"><use href="#i-hang"/></svg>吊顶(K)</div>
            <div class="list-group-item tree-item tree-kid"><svg class="ic"><use href="#i-colwrap"/></svg>独立柱装修</div>
            <div class="list-group-item tree-item tree-kid"><svg class="ic"><use href="#i-beamwrap"/></svg>单梁装修</div>
            <div class="list-group-item tree-item tree-top"><svg class="ic"><use href="#i-folder"/></svg>土方</div>
            <div class="list-group-item tree-item tree-top"><svg class="ic"><use href="#i-folder"/></svg>基础</div>
            <div class="list-group-item tree-item tree-top"><svg class="ic"><use href="#i-folder"/></svg>其它</div>
            <div class="list-group-item tree-item tree-top"><svg class="ic"><use href="#i-folder"/></svg>自定义</div>
        </div>
    </div>

    <!-- component list + layers -->
    <div class="side-box side-mid d-flex flex-column">
        <div class="pane-grip">×</div>
        <div class="pane-tabs d-flex">
            <div class="pane-tab">构件列表</div>
            <div class="pane-tab pane-tab-off">图纸管理</div>
        </div>
        <div class="pane-tools d-flex align-items-center mid-tools">
            <div class="d-flex align-items-center mid-tool" style="width:64px"><svg class="ic"><use href="#i-newdoc"/></svg>新建<span class="caret-dn"></span></div>
            <div class="d-flex align-items-center mid-tool" style="width:53px"><svg class="ic"><use href="#i-copydoc"/></svg>复制</div>
            <div class="d-flex align-items-center mid-tool" style="width:53px"><svg class="ic"><use href="#i-deldoc"/></svg>删除</div>
            <div class="d-flex align-items-center mid-tool" style="width:95px"><svg class="ic"><use href="#i-floorcopy"/></svg>层间复制</div>
            <span class="mid-more">▶▶</span>
        </div>
        <div class="search-row d-flex justify-content-between align-items-center">
            <span>搜索构件...</span>
            <svg class="ic search-ic"><use href="#i-search"/></svg>
        </div>
        <div class="comp-list">
            <div class="comp-row comp-root"><span class="comp-tri"></span>天棚</div>
            <div class="comp-row">棚2</div>
            <div class="comp-row comp-sel">棚1</div>
            <div class="comp-row">棚4</div>
            <div class="comp-row">棚3</div>
            <div class="comp-row">TP-1</div>
        </div>
        <div class="pane-gap"></div>
        <div class="pane-grip">×</div>
        <div class="pane-tabs d-flex">
            <div class="pane-tab pane-tab-off">属性列表</div>
            <div class="pane-tab">图层管理</div>
        </div>
        <div class="layer-links">显示指定图层&nbsp;&nbsp;隐藏指定图层</div>
        <div class="layer-wrap flex-grow-1">
            <table class="table table-bordered layer-table">
                <colgroup><col style="width:51px"><col style="width:36px"><col></colgroup>
                <thead>
                    <tr class="text-center"><th>开 / 关</th><th>颜色</th><th>名称</th></tr>
                </thead>
                <tbody>
                    <tr>
                        <td class="text-center"><input class="form-check-input layer-check" type="checkbox" checked></td>
                        <td class="text-center"><svg class="layer-tri" viewBox="0 0 7 9"><path d="M1 1l5 3.500L1 8z" fill="#fff" stroke="#888"/></svg></td>
                        <td class="ps-1 layer-name">已提取的 CAD 图层</td>
                    </tr>
                    <tr>
                        <td class="text-center"><input class="form-check-input layer-check" type="checkbox" checked></td>
                        <td class="text-center"><svg class="layer-tri" viewBox="0 0 7 9"><path d="M1 1l5 3.500L1 8z" fill="#fff" stroke="#888"/></svg></td>
                        <td class="ps-1 layer-name">CAD 原始图层</td>
                    </tr>
                </tbody>
            </table>
        </div>
    </div>

    <div class="split-bar"><span class="split-grip"></span></div>

    <!-- drawing -->
    <div class="cad-area">
        <svg class="cad-svg" width="1009" height="831" viewBox="498 165 1009 831" fill="none">
            <!-- dark slab areas -->
            <path d="M718 165H1507V870H1022V377H1012V262H718z" fill="#333"/>
            <path d="M1231 875H1467V996H1231z" fill="#333"/>

            <!-- grid and reference lines -->
            <g stroke="#5a6038" stroke-width="1.500">
                <path d="M498 262H642M652 262H682M718 262H840M858 262H1025"/>
                <path d="M498 465H540M570 465H754M1025 465H1172M1210 465H1385M1403 465H1507"/>
                <path d="M668 421H682"/>
            </g>
            <g stroke="#0a8a0a" stroke-width="1.500">
                <path d="M594 262H642M594 421H642M594 465H642"/>
                <path d="M718 314H1012M845 292V332"/>
            </g>
            <path d="M576 165V996" stroke="#0a7a0a" stroke-width="1.200"/>
            <path d="M718 187H1507" stroke="#1f8a1f" stroke-width="1.200"/>
            <path d="M1012 165V330" stroke="#13b013"/>
            <path d="M1012 330V377M845 342V377" stroke="#5a6038"/>
            <path d="M607 262V465" stroke="#14a814"/>
            <path d="M602 258l10 8M602 417l10 8M602 461l10 8M840 319l10-10M1007 319l10-10M1007 191l10-8M706 319l10-10" stroke="#22dd22"/>
            <g stroke="#3e6b68">
                <path d="M1025 165V439M1025 583V870"/>
                <path d="M1238 165V579M1449 165V579"/>
                <path d="M1133 579H1449"/>
            </g>
            <path d="M1343 165V270" stroke="#6a7a45"/>
            <g stroke="#6c7c4c">
                <path d="M1343 270V485M1343 522V700M1343 737V912M1343 950V996"/>
                <path d="M1025 875V912"/>
            </g>
            <path d="M1475 187V380" stroke="#22cc22"/>
            <path d="M1475 380V871M1475 880V996" stroke="#7d9657"/>
            <path d="M1475 507V544M1475 720V757M1475 935V970" stroke="#cc1010" stroke-width="1.200"/>

            <!-- parking bays -->
            <g stroke="#5a7590">
                <path d="M1094 275H1167V381H1094zM1311 275H1385V381H1311z"/>
                <path d="M1163 294L1116 324L1148 336L1118 365M1381 294L1334 324L1366 336L1336 365"/>
                <circle cx="1143" cy="427" r="32.500"/>
                <circle cx="1357" cy="427" r="32.500"/>
            </g>
            <path d="M1133 482H1203V491H1133M1272 482H1414V491H1272z" stroke="#34686a"/>
            <text class="cad-cn" x="1059" y="259" font-size="30" textLength="86" lengthAdjust="spacingAndGlyphs">充电桩车位</text>
            <text class="cad-cn" x="1285" y="257" font-size="30" textLength="86" lengthAdjust="spacingAndGlyphs">充电桩车位</text>
            <text class="cad-num cad-slate" x="1132" y="439" font-size="30" textLength="12" lengthAdjust="spacingAndGlyphs">6</text>
            <text class="cad-num cad-slate" x="1346" y="439" font-size="30" textLength="13" lengthAdjust="spacingAndGlyphs">7</text>

            <!-- outer walls -->
            <path d="M695 165H699V870H695z" fill="#8a8a8a"/>
            <path d="M699 165H718V253H699zM699 307H718V412H699z" fill="#6e6a18"/>
            <path d="M682 253H699V307H682zM682 412H699V465H682z" fill="#6e6a18" stroke="#f0a070"/>
            <path d="M699 430H718V853H699z" fill="#6e6a18"/>
            <path d="M682 729H699V870H682z" fill="#6e6a18" stroke="#f0a070"/>
            <path d="M682 853H1507V870H682z" fill="#6e6a18"/>
            <path d="M682 870H1507" stroke="#f09a60"/>
            <path d="M695 871H1507V875H695z" fill="#8f8f8f"/>
            <path d="M1022 853H1507" stroke="#a47a60"/>

            <!-- yellow infill -->
            <path d="M836 377H1022V853H1004V399H858V430H718V412H836z" fill="#ffff33"/>
            <path d="M718 430H853V434H722V853H717V430z" fill="#ff9f33"/>
            <path d="M722 849H1004V853H722z" fill="#ff9f33"/>
            <path d="M999 395H1004V853H999z" fill="#ff9f33"/>
            <path d="M844 395H1000V399H844z" fill="#ff9f33"/>
            <path d="M845 410H858V414H845zM832 425H836V430H832zM853 385H858V430H853zM1000 385H1004V395H1000z" fill="#ff9f33"/>
            <path d="M860 399H995" stroke="#ff22dd"/>
            <path d="M836 412V377H862M995 377H1022" stroke="#b05a40"/>
            <path d="M718 412H836" stroke="#8a6a40"/>
            <path d="M836 386H1012M718 421H1012" stroke="#6a7030" stroke-width="1.300"/>
            <path d="M818 421H848" stroke="#7be81b" stroke-width="1.300"/>
            <path d="M1012 377V870" stroke="#6a8a6a"/>

            <!-- columns -->
            <path d="M699 253H717V307H699zM699 412H717V430H699z" fill="#c0c0c0" stroke="#ff22dd"/>
            <path d="M699.500 165V253M699.500 307V412M705 165V253M705 307V412M711.500 165V253M711.500 307V412M718 165V412" stroke="#49d5e8"/>
            <path d="M708.500 165V332" stroke="#22ee22" stroke-width="1.200"/>
            <path d="M708 430V996" stroke="#6e9a50"/>
            <path d="M708 485V522M708 700V735" stroke="#ee1111" stroke-width="1.500"/>
            <path d="M518 861H1507" stroke="#6e8a45"/>
            <path d="M816 861H835M837 861H853M1030 861H1048M1050 861H1067M1243 861H1261M1263 861H1280" stroke="#c8280c" stroke-width="1.500"/>
            <path d="M565 849L589 874" stroke="#167a16"/>

            <!-- stair hall -->
            <path d="M730 430V476M730 498V540M730 565V608M730 630V740M730 763V808" stroke="#7fd4ff"/>
            <path d="M762 840H805M825 840H870M892 840H935M958 840H1000" stroke="#6aa0b8"/>
            <path d="M863.500 385V440M866 385V440M992 385V440M994.500 385V440" stroke="#1fb0b8"/>
            <path d="M928 387C926 410 915 425 900 439M928 387C930 410 943 425 957 439" stroke="#22e0e0"/>
            <path d="M796 638V765H940V583" stroke="#14c814"/>
            <g stroke="#ffff11">
                <path d="M731 639V712"/>
                <path d="M731 639L787 608L785 594L803 608L800 597L824 583"/>
                <path d="M815 588H859M875 588H1000"/>
                <path d="M731 662H859M875 662H1000"/>
            </g>
            <g stroke="#8a8a00" stroke-width="1.500">
                <path d="M775 613H859M875 613H1000M731 638H859M875 638H1000M731 712H859M875 712H1000M731 687H859M875 687H1000"/>
            </g>
            <path d="M859 583V717H875V583" stroke="#a0a000"/>
            <path d="M864 583V712H870V583" stroke="#ffff11"/>

            <!-- white corner pieces -->
            <path d="M699 808H762V872H699z" fill="#fff" stroke="#bbb"/>
            <path d="M719 808V853H762" stroke="#ffc8b8"/>
            <path d="M1449 808H1503V853H1449z" fill="#b8b8b8" stroke="#999"/>
            <path d="M1449 853H1503V871H1449z" fill="#fff"/>
            <path d="M1475 808V853" stroke="#fff"/>
            <path d="M1022 835H1431V791H1507M1022 844H1440V800H1507" stroke="#6aa0b0"/>

            <!-- lower stair and marks -->
            <g stroke="#c8c800">
                <path d="M792 875V992M838 875V992M859 875V992M881 875V992M924 875V992M945 875V992M988 875V992"/>
                <path d="M792 989H1032M792 993H1032"/>
            </g>
            <path d="M816 875V992M902 875V992M967 875V992M1014 945V992" stroke="#8a8a00"/>
            <path d="M989 862L1010 925H1030L998 945H1017L1035 996" stroke="#14d814"/>
            <path d="M776 937H861" stroke="#14d814"/>
            <path d="M1090 861V996" stroke="#14d814"/>
            <path d="M1084 858l10 8M1084 990l10 8" stroke="#14d814"/>
            <path d="M1090 861H1112M1090 994H1112" stroke="#0a8a0a" stroke-width="1.500"/>
            <path d="M1000 932H1102M1120 932H1246" stroke="#5a7a35"/>
            <path d="M1025 970V996" stroke="#6c7c4c"/>
            <path d="M619 954H720M593 954H645L619 980z" stroke="#14d814"/>
            <path d="M708 912V950" stroke="#cc1010"/>
            <path d="M618 994H690M751 994H1010" stroke="#5a7a35"/>

            <!-- axis bubbles -->
            <circle cx="708" cy="176" r="12" stroke="#0a8a0a"/>
            <circle cx="1475" cy="177" r="12" stroke="#0a8a0a"/>
            <path d="M502 855L510 851L518 855V867L510 871L502 867z" stroke="#0a7a0a"/>
            <path d="M698 996L708 986L718 996" stroke="#0a7a0a"/>
            <path d="M1465 996L1475 986L1485 996" stroke="#0a7a0a"/>

            <!-- dimensions -->
            <text class="cad-num" x="749" y="306" font-size="27" textLength="36" lengthAdjust="spacingAndGlyphs">1550</text>
            <text class="cad-num" x="901" y="306" font-size="27" textLength="36" lengthAdjust="spacingAndGlyphs">1900</text>
            <text class="cad-num" x="832" y="179" font-size="27" textLength="37" lengthAdjust="spacingAndGlyphs">3450</text>
            <text class="cad-num" x="1127" y="168" font-size="24" textLength="37" lengthAdjust="spacingAndGlyphs">6200</text>
            <text class="cad-num cad-white" x="704" y="184" font-size="22" textLength="9" lengthAdjust="spacingAndGlyphs">1</text>
            <text class="cad-num cad-white" x="1462" y="185" font-size="21" textLength="26" lengthAdjust="spacingAndGlyphs">1/3</text>
            <text class="cad-num cad-white" x="500" y="868" font-size="20" textLength="22" lengthAdjust="spacingAndGlyphs">1/J</text>
            <text class="cad-num cad-white" x="1462" y="1004" font-size="21" textLength="26" lengthAdjust="spacingAndGlyphs">1/2</text>
            <text class="cad-num cad-white" x="704" y="1004" font-size="21" textLength="9" lengthAdjust="spacingAndGlyphs">1</text>
            <text class="cad-num" font-size="25" textLength="36" lengthAdjust="spacingAndGlyphs" transform="translate(598 368) rotate(-90)">1800</text>
            <text class="cad-num" font-size="25" textLength="28" lengthAdjust="spacingAndGlyphs" transform="translate(798 385) rotate(-90)">400</text>
            <text class="cad-num" font-size="25" textLength="28" lengthAdjust="spacingAndGlyphs" transform="translate(595 519) rotate(-90)">500</text>
            <text class="cad-num cad-bold" font-size="20" textLength="39" lengthAdjust="spacingAndGlyphs" transform="translate(518 511) rotate(-90)">8400</text>
            <text class="cad-num cad-bold" font-size="20" textLength="39" lengthAdjust="spacingAndGlyphs" transform="translate(517 974) rotate(-90)">2100</text>
            <text class="cad-num" font-size="24" textLength="36" lengthAdjust="spacingAndGlyphs" transform="translate(1081 955) rotate(-90)">1500</text>
            <text class="cad-num" font-size="26" textLength="9" lengthAdjust="spacingAndGlyphs" transform="translate(1259 166) rotate(90)">3</text>
            <text class="cad-num" x="620" y="946" font-size="29" textLength="65" lengthAdjust="spacingAndGlyphs">-0.300</text>
            <text class="cad-up" x="748" y="951" font-size="22" textLength="12" lengthAdjust="spacingAndGlyphs">上</text>
            <text class="cad-teal" x="867" y="371" font-size="24" textLength="72" lengthAdjust="spacingAndGlyphs">FMZ乙1523</text>
            <text class="cad-num cad-teal-dim" font-size="19" textLength="44" lengthAdjust="spacingAndGlyphs" transform="translate(745 222) rotate(-90)">LC1209</text>
            <text class="cad-num cad-teal-mid" font-size="19" textLength="44" lengthAdjust="spacingAndGlyphs" transform="translate(740 402) rotate(-90)">LC1209</text>

            <!-- coordinate arrows -->
            <path d="M546 958V938H543L548 928L553 938H550V958z" fill="#11ee11"/>
            <path d="M548 956H568V952L577 958L568 964V960H548z" fill="#f01111"/>
            <circle cx="548" cy="958" r="5.500" fill="#0000cc"/>
            <text class="cad-num cad-axis-y" x="544" y="926" font-size="11">Y</text>
            <text class="cad-num cad-axis-x" x="580" y="964" font-size="14">X</text>
        </svg>

        <!-- prompt dialog -->
        <div class="card tip-box">
            <div class="card-header tip-head d-flex justify-content-between align-items-center">
                <span>提示</span>
                <span class="tip-x">×</span>
            </div>
            <div class="tip-body d-flex align-items-center">
                <svg width="30" height="30" viewBox="0 0 30 30"><circle cx="15" cy="15" r="15" fill="#2a7bd8"/><circle cx="15" cy="8.500" r="1.800" fill="#fff"/><path d="M15 12.500v11" stroke="#fff" stroke-width="3"/></svg>
                <span class="tip-msg">天棚必须布置到板上</span>
            </div>
            <div class="d-flex justify-content-end tip-foot">
                <button class="btn btn-primary tip-btn">确定</button>
            </div>
        </div>
    </div>
</div>

</body>
</html>
